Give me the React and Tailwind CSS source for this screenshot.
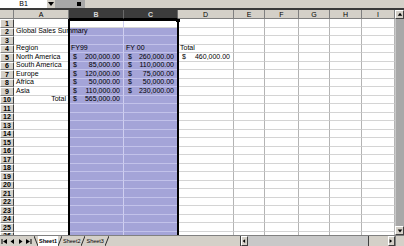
import React from "react";

const ROWS = {
  2: { A: "Global Sales Summary" },
  4: { A: "Region", B: "FY99", C: "FY 00", D: "Total" },
  5: { A: "North America", B: ["$", "200,000.00"], C: ["$", "260,000.00"], D: ["$", "460,000.00"] },
  6: { A: "South America", B: ["$", "85,000.00"], C: ["$", "110,000.00"] },
  7: { A: "Europe", B: ["$", "120,000.00"], C: ["$", "75,000.00"] },
  8: { A: "Africa", B: ["$", "50,000.00"], C: ["$", "50,000.00"] },
  9: { A: "Asia", B: ["$", "110,000.00"], C: ["$", "230,000.00"] },
  10: { A: "Total", Aright: true, B: ["$", "565,000.00"] },
};

const COLS = ["A", "B", "C", "D", "E", "F", "G", "H", "I"];

function Cell({ value, col, row, right }) {
  const sel = (col === "B" || col === "C") && row !== 1;
  const bg = sel ? "bg-[#a4a4d8]" : "bg-white";
  const bb = sel ? "border-b-[#c2c2ea]" : "border-b-[#d4d4d4]";
  const br =
    col === "B"
      ? "border-r-[#cfcff0]"
      : col === "A" || col === "C"
      ? "border-r-transparent"
      : "border-r-[#b4b4b4]";
  let content = null;
  if (Array.isArray(value)) {
    content = (
      <div className="flex justify-between pl-[4px] pr-[3px] w-full">
        <span>{value[0]}</span>
        <span>{value[1]}</span>
      </div>
    );
  } else if (value) {
    content = (
      <div className={`relative z-10 w-full px-[2px] whitespace-nowrap ${right ? "text-right" : ""}`}>
        {value}
      </div>
    );
  }
  return (
    <div
      className={`h-[8.5px] box-border border-b border-r ${bg} ${bb} ${br} flex items-end text-[7px] leading-[8px] text-black overflow-visible`}
    >
      {content}
    </div>
  );
}

function RowHeader({ n }) {
  return (
    <div className="h-[8.5px] box-border bg-[#d4d0c8] border-t border-l border-t-white border-l-white border-b border-r border-b-[#808080] border-r-[#404040] flex items-center justify-center text-[7px] leading-[7px] font-bold text-black">
      {n}
    </div>
  );
}

function Arrow({ dir, className = "" }) {
  const pts = {
    left: "5,1 5,7 1,4",
    right: "1,1 1,7 5,4",
    up: "1,5 7,5 4,1",
    down: "1,2 7,2 4,6",
  }[dir];
  return (
    <svg width="8" height="8" viewBox="0 0 8 8" className={className}>
      <polygon points={pts} fill="#000" />
    </svg>
  );
}

function Btn({ children, className = "" }) {
  return (
    <div
      className={`box-border bg-[#d4d0c8] border border-t-white border-l-white border-b-[#404040] border-r-[#404040] flex items-center justify-center ${className}`}
    >
      {children}
    </div>
  );
}

function Slash({ back }) {
  return (
    <svg width="4" height="10" viewBox="0 0 4 10" className="shrink-0">
      {back ? (
        <line x1="0" y1="0" x2="4" y2="10" stroke="#000" strokeWidth="0.8" />
      ) : (
        <line x1="0" y1="10" x2="4" y2="0" stroke="#000" strokeWidth="0.8" />
      )}
    </svg>
  );
}

export default function App() {
  const rows = Array.from({ length: 26 }, (_, i) => i + 1);
  return (
    <div
      className="w-[404px] h-[246px] overflow-hidden bg-[#d4d0c8] flex flex-col"
      style={{ fontFamily: '"Liberation Sans", Arial, sans-serif' }}
    >
      {/* Name box bar */}
      <div className="h-[10px] flex items-stretch border-b-2 border-[#3a3a3a] box-border bg-[#d4d0c8]">
        <div className="w-[47px] bg-white flex items-center justify-center text-[7px] leading-[8px] text-black">
          B1
        </div>
        <div className="w-[8px] bg-[#d4d0c8] flex items-center justify-center">
          <svg width="6" height="6" viewBox="0 0 6 6">
            <polygon points="0,1 6,1 3,5" fill="#000" />
          </svg>
        </div>
        <div className="w-[30px] bg-[#a8a8a8] flex items-center justify-end pr-[4px]">
          <div className="w-[4px] h-[4px] bg-black" />
        </div>
        <div className="flex-1" />
      </div>

      {/* Main area */}
      <div className="flex h-[225px]">
        <div className="w-[395px] flex flex-col">
          {/* Column headers */}
          <div className="grid grid-cols-[14px_55px_55px_54px_56px_31px_34px_31px_32px_33px] h-[9px]">
            <div className="box-border bg-[#d4d0c8] border-r border-b border-[#808080]" />
            {COLS.map((c) => {
              const sel = c === "B" || c === "C";
              return (
                <div
                  key={c}
                  className={`box-border border-r border-b flex items-center justify-center text-[7px] leading-[7px] ${
                    sel
                      ? "bg-[#3c3c3c] text-[#d8d8d8] font-bold border-r-[#6a6a6a] border-b-black"
                      : "bg-[#d4d0c8] text-black border-r-[#808080] border-b-[#808080]"
                  }`}
                >
                  {c}
                </div>
              );
            })}
          </div>
          {/* Body */}
          <div className="relative flex-1 overflow-hidden">
            <div className="grid grid-cols-[14px_55px_55px_54px_56px_31px_34px_31px_32px_33px]">
              {rows.map((r) => (
                <React.Fragment key={r}>
                  <RowHeader n={r} />
                  {COLS.map((c) => (
                    <Cell
                      key={c}
                      col={c}
                      row={r}
                      value={ROWS[r] ? ROWS[r][c] : undefined}
                      right={c === "A" && ROWS[r] && ROWS[r].Aright}
                    />
                  ))}
                </React.Fragment>
              ))}
            </div>
            {/* selection outline */}
            <div className="absolute left-[68px] top-0 w-[111px] h-[240px] border-2 border-black box-border pointer-events-none z-20" />
            <div className="absolute left-[176px] top-0 w-[4px] h-[3px] bg-black z-20" />
          </div>
        </div>
        {/* Vertical scrollbar */}
        <div className="w-[9px] flex flex-col bg-[#a9a9a9]">
          <Btn className="h-[9px]">
            <Arrow dir="up" className="w-[6px] h-[6px]" />
          </Btn>
          <div className="flex-1 bg-[#a8a8a8] border-l border-[#c8c8c8]" />
          <Btn className="h-[9px]">
            <Arrow dir="down" className="w-[6px] h-[6px]" />
          </Btn>
        </div>
      </div>

      {/* Sheet tabs and horizontal scrollbar */}
      <div className="h-[11px] flex items-stretch bg-[#d4d0c8] border-t border-[#808080] box-border">
        <div className="flex items-center gap-[1px] pl-[1px] w-[34px] shrink-0">
          {["first", "left", "right", "last"].map((k) => (
            <div key={k} className="w-[7px] h-[8px] flex items-center justify-center">
              <svg width="7" height="7" viewBox="0 0 7 7">
                {k === "first" && (
                  <>
                    <rect x="0.5" y="1" width="1" height="5" fill="#000" />
                    <polygon points="6,1 6,6 2,3.5" fill="#000" />
                  </>
                )}
                {k === "left" && <polygon points="5,1 5,6 1.5,3.5" fill="#000" />}
                {k === "right" && <polygon points="2,1 2,6 5.5,3.5" fill="#000" />}
                {k === "last" && (
                  <>
                    <polygon points="1,1 1,6 5,3.5" fill="#000" />
                    <rect x="5.5" y="1" width="1" height="5" fill="#000" />
                  </>
                )}
              </svg>
            </div>
          ))}
        </div>
        <div className="flex items-stretch text-[5.5px] leading-[9px] text-black">
          <Slash back />
          <div className="bg-white flex items-center px-[1px] font-bold">Sheet1</div>
          <Slash />
          <div className="flex items-center px-[1px]">Sheet2</div>
          <Slash />
          <div className="flex items-center px-[1px]">Sheet3</div>
          <Slash />
        </div>
        <div className="flex-1" />
        <div className="w-[1px] bg-[#404040]" />
        <div className="flex items-stretch w-[154px]">
          <Btn className="w-[7px]">
            <Arrow dir="left" className="w-[6px] h-[6px]" />
          </Btn>
          <div className="flex-1 bg-[#c8c8c8]" />
          <div className="w-[1px] bg-[#404040]" />
          <div className="w-[19px] bg-[#d4d0c8]" />
          <Btn className="w-[7px]">
            <Arrow dir="right" className="w-[6px] h-[6px]" />
          </Btn>
        </div>
        <div className="w-[9px] bg-[#d4d0c8] border-l border-[#808080]" />
      </div>
    </div>
  );
}
